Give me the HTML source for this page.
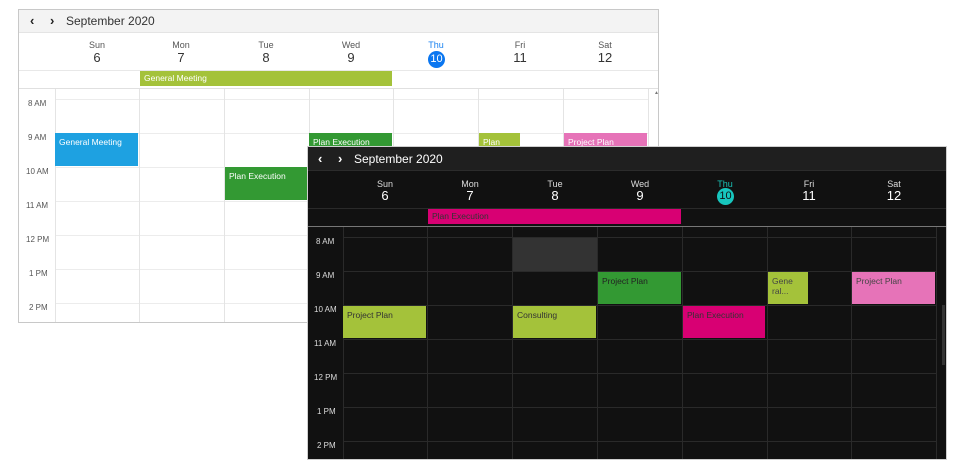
<!DOCTYPE html>
<html><head><meta charset="utf-8"><style>
*{margin:0;padding:0;box-sizing:border-box}
body{width:964px;height:472px;background:#fff;position:relative;overflow:hidden;font-family:"Liberation Sans",sans-serif}
.a{position:absolute}
.t{font-size:8px;white-space:nowrap}
.ev{position:absolute;font-size:8.5px;padding:4px 4px;overflow:hidden;white-space:nowrap;line-height:10px}
.dn{position:absolute;width:84px;text-align:center;font-size:9px}
.dd{position:absolute;width:84px;text-align:center;font-size:13px}
</style></head><body>
<!-- LIGHT -->
<div class="a" style="left:18px;top:9px;width:641px;height:314px;border:1px solid #c8c8c8;background:#fff"></div>
<div class="a" style="left:19px;top:10px;width:639px;height:23px;background:#f3f3f3;border-bottom:1px solid #e4e4e4"></div>
<div class="a" style="left:30px;top:13px;font-size:13px;color:#222;font-weight:bold">&#8249;</div>
<div class="a" style="left:50px;top:13px;font-size:13px;color:#222;font-weight:bold">&#8250;</div>
<div class="a" style="left:66px;top:14px;font-size:12px;color:#333">September 2020</div>
<div class="dn" style="left:55px;top:40px;color:#555">Sun</div><div class="dd" style="left:55px;top:50px;color:#333">6</div>
<div class="dn" style="left:139px;top:40px;color:#555">Mon</div><div class="dd" style="left:139px;top:50px;color:#333">7</div>
<div class="dn" style="left:224px;top:40px;color:#555">Tue</div><div class="dd" style="left:224px;top:50px;color:#333">8</div>
<div class="dn" style="left:309px;top:40px;color:#555">Wed</div><div class="dd" style="left:309px;top:50px;color:#333">9</div>
<div class="dn" style="left:394px;top:40px;color:#1a82f0">Thu</div>
<div class="a" style="left:428px;top:51px;width:17px;height:17px;border-radius:50%;background:#0a76f0;color:#fff;font-size:11px;text-align:center;line-height:17px">10</div>
<div class="dn" style="left:478px;top:40px;color:#555">Fri</div><div class="dd" style="left:478px;top:50px;color:#333">11</div>
<div class="dn" style="left:563px;top:40px;color:#555">Sat</div><div class="dd" style="left:563px;top:50px;color:#333">12</div>
<div class="a" style="left:19px;top:70px;width:639px;height:1px;background:#e8e8e8"></div>
<div class="a" style="left:19px;top:88px;width:639px;height:1px;background:#e0e0e0"></div>
<div class="a" style="left:55px;top:99px;width:594px;height:1px;background:#ececec"></div>
<div class="a" style="left:55px;top:133px;width:594px;height:189px;background:repeating-linear-gradient(180deg,#ececec 0 1px,transparent 1px 34px)"></div>
<div class="a" style="left:55px;top:89px;width:1px;height:233px;background:#e4e4e4"></div>
<div class="a" style="left:139px;top:89px;width:1px;height:233px;background:#e4e4e4"></div>
<div class="a" style="left:224px;top:89px;width:1px;height:233px;background:#e4e4e4"></div>
<div class="a" style="left:309px;top:89px;width:1px;height:233px;background:#e4e4e4"></div>
<div class="a" style="left:393px;top:89px;width:1px;height:233px;background:#e4e4e4"></div>
<div class="a" style="left:478px;top:89px;width:1px;height:233px;background:#e4e4e4"></div>
<div class="a" style="left:563px;top:89px;width:1px;height:233px;background:#e4e4e4"></div>
<div class="a" style="left:648px;top:89px;width:1px;height:233px;background:#e4e4e4"></div>
<div class="a" style="left:654px;top:90px;font-size:5px;color:#777">&#9650;</div>
<div class="a t" style="left:28px;top:99px;color:#555">8 AM</div>
<div class="a t" style="left:28px;top:133px;color:#555">9 AM</div>
<div class="a t" style="left:26px;top:167px;color:#555">10 AM</div>
<div class="a t" style="left:26px;top:201px;color:#555">11 AM</div>
<div class="a t" style="left:26px;top:235px;color:#555">12 PM</div>
<div class="a t" style="left:29px;top:269px;color:#555">1 PM</div>
<div class="a t" style="left:29px;top:303px;color:#555">2 PM</div>
<div class="ev" style="left:140px;top:71px;width:252px;height:15px;background:#a4c23a;color:#fff;padding:2px 4px">General Meeting</div>
<div class="ev" style="left:55px;top:133px;width:83px;height:33px;background:#1ea1e1;color:#fff">General Meeting</div>
<div class="ev" style="left:225px;top:167px;width:83px;height:33px;background:#339933;color:#fff">Plan Execution</div>
<div class="ev" style="left:309px;top:133px;width:83px;height:33px;background:#339933;color:#fff">Plan Execution</div>
<div class="ev" style="left:479px;top:133px;width:41px;height:33px;background:#a4c23a;color:#fff">Plan</div>
<div class="ev" style="left:564px;top:133px;width:83px;height:33px;background:#e673b8;color:#fff">Project Plan</div>
<!-- DARK -->
<div class="a" style="left:307px;top:146px;width:640px;height:314px;background:#111;border:1px solid #cfcfcf"></div>
<div class="a" style="left:308px;top:147px;width:638px;height:24px;background:#1f1f1f;border-bottom:1px solid #2c2c2c"></div>
<div class="a" style="left:318px;top:151px;font-size:13px;color:#fff;font-weight:bold">&#8249;</div>
<div class="a" style="left:338px;top:151px;font-size:13px;color:#fff;font-weight:bold">&#8250;</div>
<div class="a" style="left:354px;top:152px;font-size:12px;color:#fff">September 2020</div>
<div class="dn" style="left:343px;top:179px;color:#ddd">Sun</div><div class="dd" style="left:343px;top:188px;color:#fff">6</div>
<div class="dn" style="left:428px;top:179px;color:#ddd">Mon</div><div class="dd" style="left:428px;top:188px;color:#fff">7</div>
<div class="dn" style="left:513px;top:179px;color:#ddd">Tue</div><div class="dd" style="left:513px;top:188px;color:#fff">8</div>
<div class="dn" style="left:598px;top:179px;color:#ddd">Wed</div><div class="dd" style="left:598px;top:188px;color:#fff">9</div>
<div class="dn" style="left:683px;top:179px;color:#18c0b4">Thu</div>
<div class="a" style="left:717px;top:188px;width:17px;height:17px;border-radius:50%;background:#17c6be;color:#111;font-size:11px;text-align:center;line-height:17px">10</div>
<div class="dn" style="left:767px;top:179px;color:#ddd">Fri</div><div class="dd" style="left:767px;top:188px;color:#fff">11</div>
<div class="dn" style="left:852px;top:179px;color:#ddd">Sat</div><div class="dd" style="left:852px;top:188px;color:#fff">12</div>
<div class="a" style="left:308px;top:208px;width:638px;height:1px;background:#2a2a2a"></div>
<div class="a" style="left:308px;top:226px;width:638px;height:1px;background:#777"></div>
<div class="a" style="left:513px;top:238px;width:84px;height:33px;background:#333"></div>
<div class="a" style="left:343px;top:237px;width:594px;height:222px;background:repeating-linear-gradient(180deg,#2a2a2a 0 1px,transparent 1px 34px)"></div>
<div class="a" style="left:343px;top:227px;width:1px;height:232px;background:#2a2a2a"></div>
<div class="a" style="left:427px;top:227px;width:1px;height:232px;background:#2a2a2a"></div>
<div class="a" style="left:512px;top:227px;width:1px;height:232px;background:#2a2a2a"></div>
<div class="a" style="left:597px;top:227px;width:1px;height:232px;background:#2a2a2a"></div>
<div class="a" style="left:682px;top:227px;width:1px;height:232px;background:#2a2a2a"></div>
<div class="a" style="left:767px;top:227px;width:1px;height:232px;background:#2a2a2a"></div>
<div class="a" style="left:851px;top:227px;width:1px;height:232px;background:#2a2a2a"></div>
<div class="a" style="left:936px;top:227px;width:1px;height:232px;background:#2a2a2a"></div>
<div class="a" style="left:942px;top:305px;width:3px;height:60px;background:#333"></div>
<div class="a t" style="left:316px;top:237px;color:#ddd">8 AM</div>
<div class="a t" style="left:316px;top:271px;color:#ddd">9 AM</div>
<div class="a t" style="left:314px;top:305px;color:#ddd">10 AM</div>
<div class="a t" style="left:314px;top:339px;color:#ddd">11 AM</div>
<div class="a t" style="left:314px;top:373px;color:#ddd">12 PM</div>
<div class="a t" style="left:317px;top:407px;color:#ddd">1 PM</div>
<div class="a t" style="left:317px;top:441px;color:#ddd">2 PM</div>
<div class="ev" style="left:428px;top:209px;width:253px;height:15px;background:#d80073;color:#333;padding:2px 4px">Plan Execution</div>
<div class="ev" style="left:598px;top:272px;width:83px;height:32px;background:#339933;color:#222">Project Plan</div>
<div class="ev" style="left:768px;top:272px;width:40px;height:32px;background:#a4c23a;color:#444;white-space:normal">Gene<br>ral...</div>
<div class="ev" style="left:852px;top:272px;width:83px;height:32px;background:#e673b8;color:#444">Project Plan</div>
<div class="ev" style="left:343px;top:306px;width:83px;height:32px;background:#a4c23a;color:#333">Project Plan</div>
<div class="ev" style="left:513px;top:306px;width:83px;height:32px;background:#a4c23a;color:#333">Consulting</div>
<div class="ev" style="left:683px;top:306px;width:82px;height:32px;background:#d80073;color:#333">Plan Execution</div>
</body></html>
